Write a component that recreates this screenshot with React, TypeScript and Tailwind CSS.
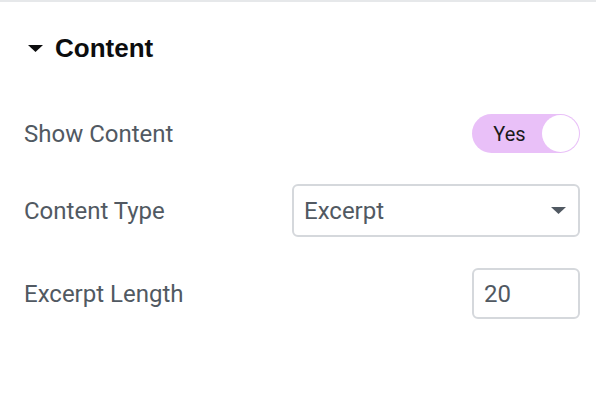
export default function App() {
  return (
    <main className="w-[596px] h-[396px] bg-white border-t-2 border-[#e6e8ea] font-['Roboto',sans-serif]">
      {/* Section header */}
      <div className="flex items-center h-[88px] pl-[28px] pt-[4px]">
        <svg width="15" height="7" viewBox="0 0 15 7" className="mr-[12px]">
          <path d="M0 0 L15 0 L7.5 7 Z" fill="#0c0d0e" />
        </svg>
        <h2 className="text-[26px] font-bold text-[#0c0d0e] font-['Liberation_Sans',Arial,sans-serif]">Content</h2>
      </div>

      {/* Show Content */}
      <div className="flex items-center justify-between pl-[24px] pr-[16px] mt-[24px]">
        <span className="text-[24px] text-[#515962]">Show Content</span>
        <div className="flex items-center w-[108px] h-[39px] rounded-full bg-[#e9c0f8] p-[1px]">
          <span className="flex-1 text-center text-[20px] text-[#1a1a1a] pl-[4px]">Yes</span>
          <span className="w-[37px] h-[37px] rounded-full bg-white" />
        </div>
      </div>

      {/* Content Type */}
      <div className="flex items-center justify-between pl-[24px] pr-[16px] mt-[31px]">
        <span className="text-[24px] text-[#515962]">Content Type</span>
        <div className="flex items-center justify-between w-[288px] h-[53px] border-2 border-[#d5d8dc] rounded-[6px] pl-[10px] pr-[12px]">
          <span className="text-[24px] text-[#515962]">Excerpt</span>
          <svg width="15" height="7" viewBox="0 0 15 7">
            <path d="M0 0 L15 0 L7.5 7 Z" fill="#515962" />
          </svg>
        </div>
      </div>

      {/* Excerpt Length */}
      <div className="flex items-center justify-between pl-[24px] pr-[16px] mt-[31px]">
        <span className="text-[24px] text-[#515962]">Excerpt Length</span>
        <div className="flex items-center w-[108px] h-[51px] border-2 border-[#d5d8dc] rounded-[6px] pl-[10px]">
          <span className="text-[24px] text-[#515962]">20</span>
        </div>
      </div>
    </main>
  );
}
